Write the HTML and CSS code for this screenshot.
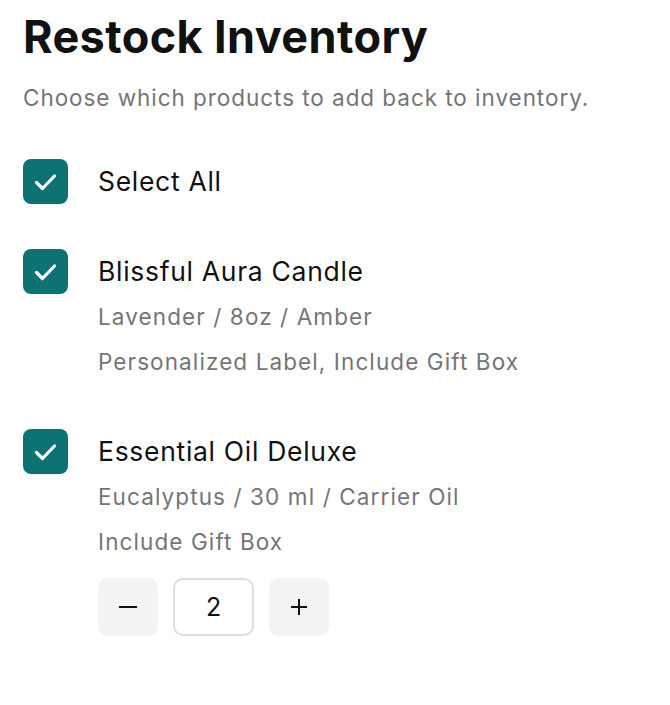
FILE: index.html
```html
<!DOCTYPE html>
<html lang="en">
<head>
<meta charset="utf-8">
<title>Restock Inventory</title>
<link rel="stylesheet" href="styles.css">
</head>
<body>
<main class="page">
  <h1 class="title">Restock Inventory</h1>
  <p class="subtitle">Choose which products to add back to inventory.</p>

  <ul class="list">
    <li class="item">
      <span class="check"><svg viewBox="0 0 45 45" width="45" height="45"><path d="M13.5 23.5l6 6 12-12.5" fill="none" stroke="#fff" stroke-width="3.2" stroke-linecap="round" stroke-linejoin="round"/></svg></span>
      <div class="info">
        <div class="name">Select All</div>
      </div>
    </li>
    <li class="item">
      <span class="check"><svg viewBox="0 0 45 45" width="45" height="45"><path d="M13.5 23.5l6 6 12-12.5" fill="none" stroke="#fff" stroke-width="3.2" stroke-linecap="round" stroke-linejoin="round"/></svg></span>
      <div class="info">
        <div class="name">Blissful Aura Candle</div>
        <div class="detail">Lavender / 8oz / Amber</div>
        <div class="detail">Personalized Label, Include Gift Box</div>
      </div>
    </li>
    <li class="item">
      <span class="check"><svg viewBox="0 0 45 45" width="45" height="45"><path d="M13.5 23.5l6 6 12-12.5" fill="none" stroke="#fff" stroke-width="3.2" stroke-linecap="round" stroke-linejoin="round"/></svg></span>
      <div class="info">
        <div class="name">Essential Oil Deluxe</div>
        <div class="detail">Eucalyptus / 30 ml / Carrier Oil</div>
        <div class="detail">Include Gift Box</div>
        <div class="stepper">
          <button class="step-btn" type="button" aria-label="Decrease"><svg viewBox="0 0 24 24" width="24" height="24"><path d="M3 12h18" stroke="#111" stroke-width="2" fill="none"/></svg></button>
          <div class="qty">2</div>
          <button class="step-btn" type="button" aria-label="Increase"><svg viewBox="0 0 24 24" width="24" height="24"><path d="M4 12h16M12 4v16" stroke="#111" stroke-width="2" fill="none"/></svg></button>
        </div>
      </div>
    </li>
  </ul>
</main>
</body>
</html>
```

FILE: styles.css
```css
* { box-sizing: border-box; }
html, body { margin: 0; padding: 0; background: #fff; }
body {
  font-family: Inter, "Noto Sans", "Liberation Sans", sans-serif;
  color: #111;
}
.page {
  padding: 9px 22px 0 23px;
}
.title {
  margin: 0;
  font-size: 45px;
  font-weight: 700;
  line-height: 56px;
  letter-spacing: 0.4px;
  color: #111;
}
.subtitle {
  margin: 19px 0 0 0;
  font-size: 22.5px;
  line-height: 28px;
  letter-spacing: 0.95px;
  color: #757575;
}
.list {
  list-style: none;
  margin: 0;
  padding: 0;
  margin-top: 47px;
  display: flex;
  flex-direction: column;
  gap: 45px;
}
.item {
  display: flex;
  align-items: flex-start;
  gap: 30px;
}
.check {
  flex: 0 0 45px;
  width: 45px;
  height: 45px;
  border-radius: 8px;
  background: #0d7274;
  display: flex;
  align-items: center;
  justify-content: center;
}
.check svg { display: block; }
.info {
  display: flex;
  flex-direction: column;
}
.name {
  font-size: 26.5px;
  line-height: 45px;
  letter-spacing: 0.7px;
  color: #111;
}
.detail {
  font-size: 22.5px;
  line-height: 45px;
  letter-spacing: 1.1px;
  color: #757575;
}
.stepper {
  display: flex;
  gap: 15px;
  margin-top: 14px;
}
.step-btn {
  width: 60px;
  height: 58px;
  border: none;
  border-radius: 10px;
  background: #f3f3f3;
  display: flex;
  align-items: center;
  justify-content: center;
  padding: 0;
}
.qty {
  width: 81px;
  height: 58px;
  border: 2px solid #dedede;
  border-radius: 10px;
  display: flex;
  align-items: center;
  justify-content: center;
  font-size: 25px;
  color: #111;
}
```
